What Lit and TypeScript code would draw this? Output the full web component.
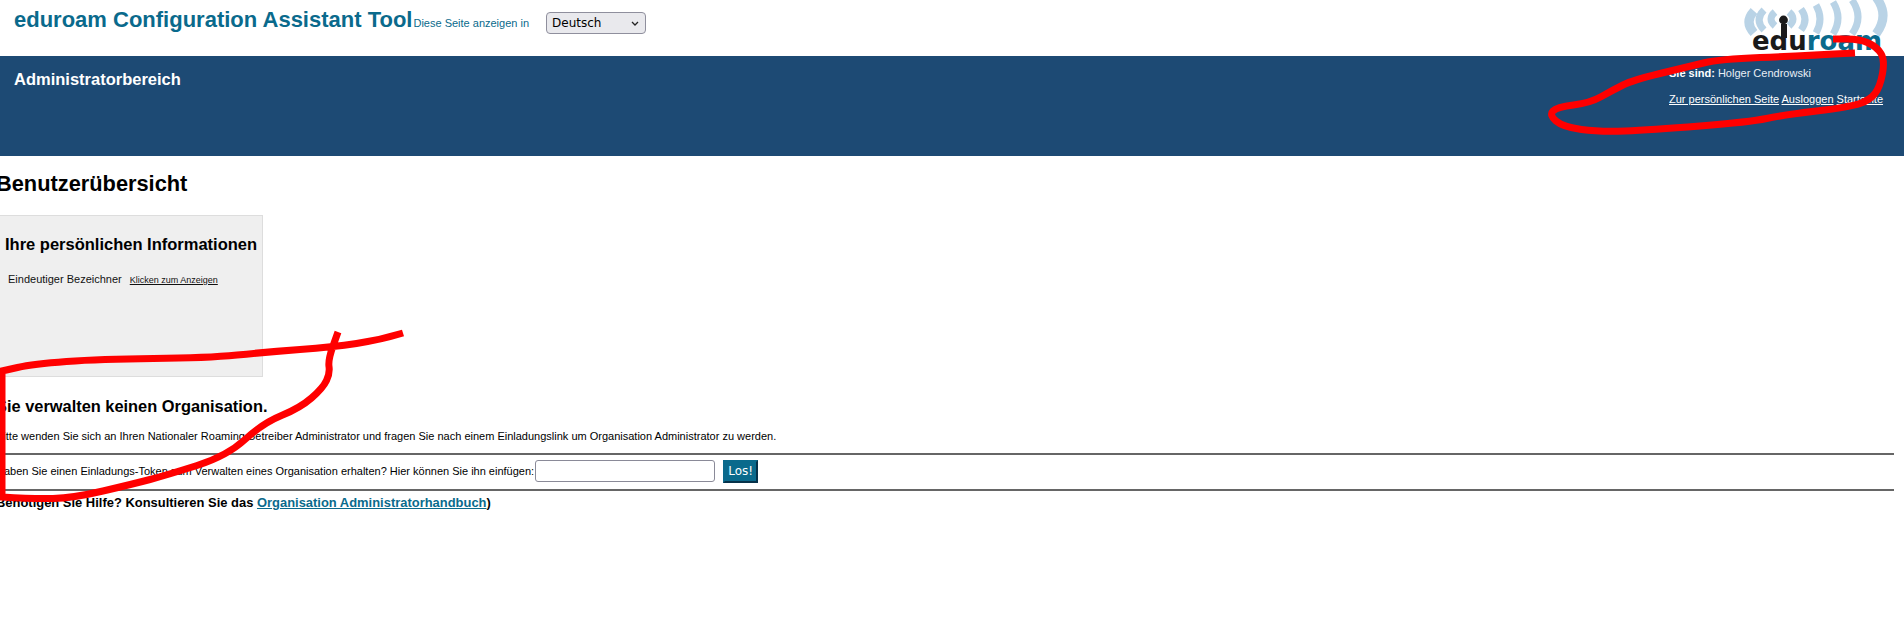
import { LitElement, html, css, svg } from "lit";
import { customElement } from "lit/decorators.js";

const ptsA: number[][] = [[1855,53],[1800,56],[1720,59],[1687,67],[1633,80],[1613,90],[1590,103],[1557,107],[1549,115],[1563,127],[1600,132],[1650,130],[1750,122],[1783,115],[1850,107],[1870,100],[1880,87],[1885,60],[1877,47],[1860,39],[1833,39]];
const ptsB1: number[][] = [[403,333],[380,340],[333,347],[267,352],[207,358],[100,359],[33,364],[2,371]];
const ptsB2: number[][] = [[2,497],[33,499],[73,498],[133,484],[167,475],[227,456],[263,423],[300,408],[323,388],[330,373],[328,360],[338,332]];

const smooth = (p: number[][]) => {
  let d = `M${p[0][0]} ${p[0][1]}`;
  for (let i = 1; i < p.length - 1; i++) {
    const mx = (p[i][0] + p[i + 1][0]) / 2;
    const my = (p[i][1] + p[i + 1][1]) / 2;
    d += ` Q${p[i][0]} ${p[i][1]} ${mx} ${my}`;
  }
  const l = p[p.length - 1];
  return d + ` L${l[0]} ${l[1]}`;
};

const rightArcs: number[][] = [[54,58,12,26],[66,70,9,30],[81,85,5,33],[98,103,2,34],[117,123,0,34],[141,148,-3,34]];
const leftArcs: number[][] = [[40,36,12,26],[29,24,10,30],[19,14,11,33]];

@customElement("app-root")
export class AppRoot extends LitElement {
  static styles = css`
    :host { display: block; position: relative; width: 1904px; height: 635px; overflow: hidden; background: #fff; color: #000; font-family: "Liberation Sans", Arial, sans-serif; }
    .top { height: 56px; display: flex; align-items: flex-start; padding-left: 14px; position: relative; }
    .title { margin: 6px 0 0; font-size: 22px; line-height: 28px; font-weight: 700; color: #0a6a8c; white-space: nowrap; }
    .lang { display: flex; align-items: center; font-size: 11px; color: #0a6a8c; margin: 12px 0 0 1px; height: 22px; }
    .lang span { margin-right: 17px; }
    .sel { position: relative; display: block; width: 100px; height: 22px; }
    .sel svg { position: absolute; right: 7px; top: 9px; width: 8px; height: 5px; }
    select { appearance: none; display: block; width: 100px; height: 22px; box-sizing: border-box; font-family: "DejaVu Sans", sans-serif; font-size: 12px; background: #e9e9ed; border: 1px solid #8f8f9d; border-radius: 4px; color: #000; padding: 0 0 0 5px; }
    .logo { position: absolute; left: 1735px; top: 0; width: 160px; height: 58px; z-index: 1; }
    .logo text { font-family: "DejaVu Sans", sans-serif; font-weight: 700; font-size: 27px; }
    .band { height: 100px; background: #1d4a74; color: #fff; display: flex; justify-content: space-between; padding: 0 20px 0 14px; box-sizing: border-box; }
    .band h2 { margin: 13px 0 0; font-size: 16.5px; line-height: 20px; font-weight: 700; }
    .user { font-size: 11px; margin-top: 11px; color: #e8eef4; width: 215px; white-space: nowrap; }
    .user p { margin: 0 0 13px; line-height: 13px; }
    .user b { color: #fff; }
    .user a { color: #fff; text-decoration: underline; }
    main { margin-left: -4px; padding-right: 10px; }
    h1 { margin: 0; padding-top: 15px; font-size: 21.8px; line-height: 26px; font-weight: 700; white-space: nowrap; }
    .card { margin: 18px 0 0 -1px; width: 268px; height: 162px; box-sizing: border-box; background: #efefef; border: 1px solid #ddd; padding: 18px 0 0 9px; }
    .card h3 { margin: 0; font-size: 16.5px; line-height: 21px; font-weight: 700; white-space: nowrap; }
    .row { margin: 17px 0 0 3px; font-size: 11px; line-height: 14px; display: flex; align-items: baseline; gap: 8px; color: #111; }
    .row a { color: #111; font-size: 9px; text-decoration: underline; }
    h4 { margin: 19px 0 0; font-size: 16.4px; line-height: 21px; font-weight: 700; white-space: nowrap; }
    .note { margin: 12px 0 0; font-size: 11px; line-height: 14px; white-space: nowrap; }
    hr { margin: 0; border: 0; height: 2px; background: #666; }
    .note + hr { margin-top: 10px; }
    .token { font-size: 11px; height: 34px; box-sizing: border-box; padding-bottom: 2px; display: flex; align-items: center; white-space: nowrap; }
    .token input { width: 180px; height: 22px; box-sizing: border-box; margin: 0 0 0 1px; border: 1px solid #8a8a98; border-radius: 3px; background: #fff; padding: 0; }
    .token button { margin-left: 8px; width: 35px; height: 23px; box-sizing: border-box; background: #0a6a8c; color: #fff; border: 2px solid; border-color: #0a6a8c #06324a #06324a #0a6a8c; font-family: "DejaVu Sans", sans-serif; font-size: 12px; padding: 0; }
    .help { margin: 4px 0 0; font-size: 12.95px; line-height: 15px; font-weight: 700; white-space: nowrap; }
    .help a { color: #0a6a8c; text-decoration: underline; }
    .ink { position: absolute; left: 0; top: 0; width: 1904px; height: 635px; z-index: 2; pointer-events: none; }
    .ink path { fill: none; stroke: #f00; stroke-width: 7; stroke-linejoin: miter; stroke-linecap: butt; }
  `;

  logo() {
    const arc = (a: number[]) => {
      const mid = (a[2] + a[3]) / 2;
      const ctrl = a[1] + (a[1] - a[0]);
      return `M${a[0]} ${a[2]} Q${ctrl} ${mid} ${a[0]} ${a[3]}`;
    };
    return html`<svg class="logo" viewBox="0 0 160 58" aria-label="eduroam">
      ${[...rightArcs, ...leftArcs].map((a, i) => svg`<path d=${arc(a)} fill="none" stroke="#b9d3e6" stroke-width=${i === 5 || i === 8 ? 9 : 7}/>`)}
      <circle cx="48.5" cy="20" r="4.4" fill="#1a1a1a"/>
      <rect x="46" y="24" width="6" height="14" fill="#1a1a1a"/>
      <text x="17" y="50" textLength="130" lengthAdjust="spacingAndGlyphs"><tspan fill="#1a1a1a">edu</tspan><tspan fill="#0a6a8c">roam</tspan></text>
    </svg>`;
  }

  render() {
    const b = `${smooth(ptsB1)} L2 497 ${smooth(ptsB2).replace(/^M2 497/, "")}`;
    return html`
      <div class="top">
        <div class="title">eduroam Configuration Assistant Tool</div>
        <div class="lang"><span>Diese Seite anzeigen in</span><div class="sel"><select><option>Deutsch</option></select><svg viewBox="0 0 8 5"><path d="M1 1 L4 4 L7 1" fill="none" stroke="#222" stroke-width="1.3"/></svg></div></div>
        ${this.logo()}
      </div>
      <div class="band">
        <h2>Administratorbereich</h2>
        <div class="user">
          <p><b>Sie sind:</b> Holger Cendrowski</p>
          <p><a href="#">Zur persönlichen Seite</a> <a href="#">Ausloggen</a> <a href="#">Startseite</a></p>
        </div>
      </div>
      <main>
        <h1>Benutzerübersicht</h1>
        <div class="card">
          <h3>Ihre persönlichen Informationen</h3>
          <div class="row"><span>Eindeutiger Bezeichner</span><a href="#">Klicken zum Anzeigen</a></div>
        </div>
        <h4>Sie verwalten keinen Organisation.</h4>
        <p class="note">Bitte wenden Sie sich an Ihren Nationaler Roaming Betreiber Administrator und fragen Sie nach einem Einladungslink um Organisation Administrator zu werden.</p>
        <hr />
        <div class="token">Haben Sie einen Einladungs-Token zum Verwalten eines Organisation erhalten? Hier können Sie ihn einfügen:<input /><button>Los!</button></div>
        <hr />
        <p class="help">Benötigen Sie Hilfe? Konsultieren Sie das <a href="#">Organisation Administratorhandbuch</a>)</p>
      </main>
      <svg class="ink" viewBox="0 0 1904 635"><path d=${smooth(ptsA)}></path><path d=${b}></path></svg>
    `;
  }
}
